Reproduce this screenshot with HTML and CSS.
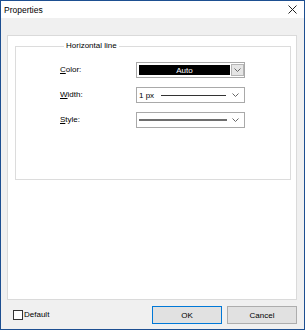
FILE: index.html
```html
<!DOCTYPE html>
<html>
<head>
<meta charset="utf-8">
<link rel="stylesheet" href="styles.css">
</head>
<body>
<div class="window">
  <div class="titlebar">
    <span class="title">Properties</span>
    <svg class="close" width="9" height="9" viewBox="0 0 9 9"><path d="M0.5 0.5 L8.5 8.5 M8.5 0.5 L0.5 8.5" stroke="#222" stroke-width="1" fill="none"/></svg>
  </div>
  <div class="body">
    <div class="panel">
      <fieldset class="group">
        <legend>Horizontal line</legend>
        <div class="rows">
          <span class="lbl"><u>C</u>olor:</span>
          <div class="combo color">
            <div class="swatch">Auto</div>
            <div class="ddbtn"><svg width="7" height="4" viewBox="0 0 7 4"><path d="M0.5 0.5 L3.5 3.5 L6.5 0.5" stroke="#666" fill="none"/></svg></div>
          </div>
          <span class="lbl"><u>W</u>idth:</span>
          <div class="combo">
            <span class="val">1 px</span>
            <span class="line thin"></span>
            <svg class="chev" width="7" height="4" viewBox="0 0 7 4"><path d="M0.5 0.5 L3.5 3.5 L6.5 0.5" stroke="#666" fill="none"/></svg>
          </div>
          <span class="lbl"><u>S</u>tyle:</span>
          <div class="combo">
            <span class="line thick"></span>
            <svg class="chev" width="7" height="4" viewBox="0 0 7 4"><path d="M0.5 0.5 L3.5 3.5 L6.5 0.5" stroke="#666" fill="none"/></svg>
          </div>
        </div>
      </fieldset>
    </div>
    <div class="footer">
      <label class="check"><span class="box"></span>Default</label>
      <div class="buttons">
        <button class="btn ok">OK</button>
        <button class="btn">Cancel</button>
      </div>
    </div>
  </div>
</div>
</body>
</html>
```
FILE: styles.css
```css
* { box-sizing: border-box; }
html, body { margin: 0; padding: 0; background: #fff; }
body { font-family: "Liberation Sans", Arial, sans-serif; font-size: 8px; color: #000; }

.window {
  width: 305px;
  height: 330px;
  border: 1px solid #1d4f91;
  display: flex;
  flex-direction: column;
  background: #f0f0f0;
}
.titlebar {
  height: 17px;
  background: #fff;
  display: flex;
  align-items: center;
  justify-content: space-between;
  padding: 0 7px 0 3px;
  flex: none;
}
.title { font-size: 8.5px; }
.close { display: block; }

.body {
  flex: 1;
  display: flex;
  flex-direction: column;
  padding: 17px 7px 0 6px;
}
.panel {
  height: 265px;
  background: #fff;
  border: 1px solid #dadada;
  padding: 5px 5px 0 7px;
  flex: none;
}
.group {
  margin: 0;
  padding: 11px 0 0 44px;
  height: 139px;
  border: 1px solid #dcdcdc;
}
.group legend {
  padding: 0 2px;
  margin-left: 4px;
  line-height: 10px;
  color: #000;
}
.rows {
  display: grid;
  grid-template-columns: 76px 109px;
  grid-auto-rows: 16px;
  row-gap: 9px;
  align-items: center;
}
.lbl { line-height: 10px; }
.combo {
  height: 16px;
  border: 1px solid #a9a9a9;
  background: #fff;
  display: flex;
  align-items: center;
  padding: 0 2px;
}
.combo.color { padding: 1px 0 1px 2px; align-items: stretch; }
.swatch {
  flex: 1;
  background: #000;
  color: #fff;
  display: flex;
  align-items: center;
  justify-content: center;
  margin: 1px 1px 1px 0;
}
.ddbtn {
  width: 13px;
  background: #e5e5e5;
  border: 1px solid #b5b5b5;
  display: flex;
  align-items: center;
  justify-content: center;
}
.val { margin-right: 7px; }
.line { flex: 1; }
.line.thin { height: 1px; background: #333; margin-right: 5px; }
.line.thick { height: 2px; background: #6e6e6e; margin-right: 4px; }
.chev { display: block; margin: 0 3px 0 1px; }

.footer {
  flex: 1;
  display: flex;
  align-items: flex-start;
  justify-content: space-between;
  padding-top: 6px;
}
.check {
  display: flex;
  align-items: center;
  margin: 3px 0 0 6px;
  line-height: 11px;
}
.box {
  width: 10px;
  height: 10px;
  border: 1px solid #333;
  background: #fff;
  margin-right: 1px;
}
.buttons { display: flex; gap: 5px; }
.btn {
  width: 70px;
  height: 18px;
  font-family: "Liberation Sans", Arial, sans-serif;
  font-size: 8px;
  background: #e1e1e1;
  border: 1px solid #adadad;
  padding: 0;
  margin: 0;
  color: #000;
}
.btn.ok { border: 1px solid #0078d7; }
```
